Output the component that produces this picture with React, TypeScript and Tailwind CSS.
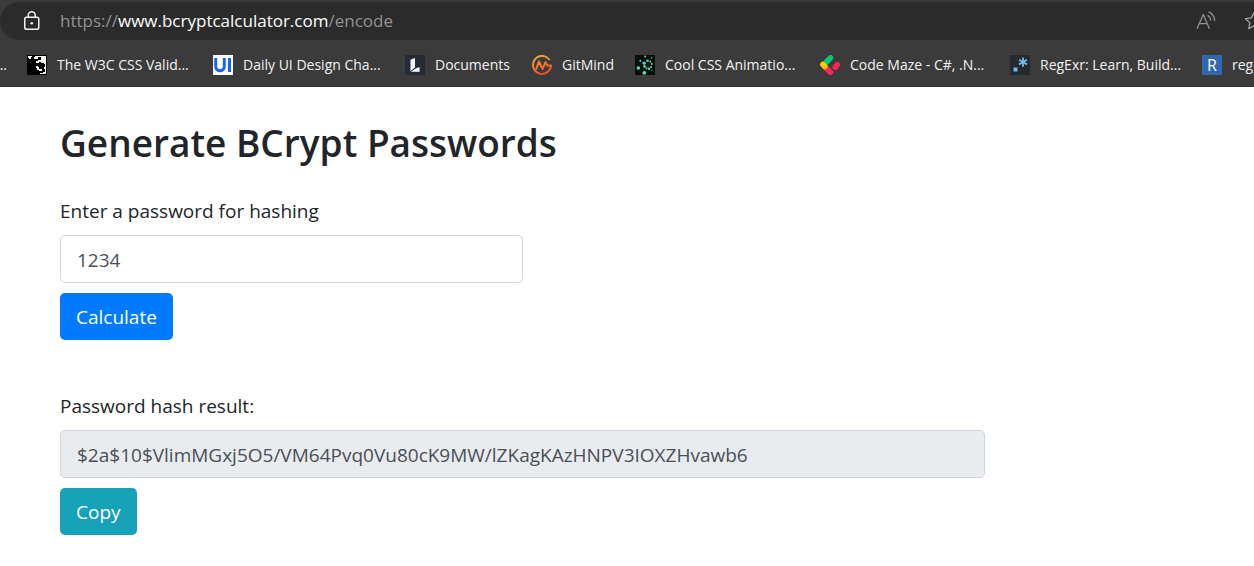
import { useState, type ReactNode } from "react";

function LockIcon() {
  return (
    <svg className="size-5 shrink-0" viewBox="0 0 20 20" fill="none" stroke="#f2f2f2" strokeWidth="1.5">
      <rect x="2.75" y="6.25" width="14" height="12" rx="1.8" />
      <path d="M6.25 6V4.300a3.500 3.500 0 0 1 7 0V6" />
      <circle cx="9.8" cy="12.300" r="1.3" fill="#f2f2f2" stroke="none" />
    </svg>
  );
}

function ReadAloudIcon() {
  return (
    <svg className="size-5" viewBox="0 0 20 20" fill="none" stroke="#929292" strokeWidth="1.3" strokeLinecap="round">
      <path d="M1.2 17.3 7.3 3.600l5.900 13.700M3.300 12.700h7.900" strokeLinejoin="round" />
      <path d="M12 4.600c1.700 1 2.600 2.600 2.700 4.600M13.200 1.200c3.200 1.600 5.300 4.600 5.400 8.400" />
    </svg>
  );
}

function StarIcon() {
  return (
    <svg className="size-5" viewBox="0 0 20 20" fill="none" stroke="#a2a2a2" strokeWidth="1.3" strokeLinejoin="round">
      <path d="m10 1.500 2.600 5.400 5.900.800-4.300 4.100 1 5.800-5.200-2.800-5.200 2.800 1-5.800L1.500 7.700l5.900-.8Z" />
    </svg>
  );
}

const icon = "size-5 shrink-0";

const bookmarks: { label: string; icon: ReactNode }[] = [
  {
    label: "The W3C CSS Valid...",
    icon: (
      <svg className={icon} viewBox="0 0 20 20">
        <path fill="#000" d="M0 0h20v20H0z" />
        <path fill="#f5f5ef" d="M1 1h4v1H4v2H2V3H1zM8 1h11v18h-6v-1h3v-1h2v-3h-1v-2h1V9h-1V8h-3V7h-2v1H9V6h2V4H7V2h1z" />
        <path fill="#000" d="M11 2h3v3h-3zM10 8h4v3h-4z" />
        <path fill="#f5f5ef" d="M9 11h2v1h1v2h3v2h-3v-1h-2v-2H9z" />
      </svg>
    ),
  },
  {
    label: "Daily UI Design Cha...",
    icon: (
      <svg className={icon} viewBox="0 0 20 20">
        <path fill="#fff" d="M0 0h20v20H0z" />
        <path d="M2.700 3v8.200c0 6 8.600 6 8.600 0V3M16.500 3v14" fill="none" stroke="#1763ff" strokeWidth="3" />
      </svg>
    ),
  },
  {
    label: "Documents",
    icon: (
      <svg className={icon} viewBox="0 0 20 20">
        <path fill="#252b35" d="M0 0h20v20H0z" />
        <path fill="#fff" d="M5.500 4.800 10 3v9.200l-4.500 4zM6 16.700l4.600-3.200 4-1.600v4.800z" />
      </svg>
    ),
  },
  {
    label: "GitMind",
    icon: (
      <svg className={icon} viewBox="0 0 20 20" fill="none">
        <defs>
          <linearGradient id="gitmind" x1="4" y1="1" x2="13" y2="19" gradientUnits="userSpaceOnUse">
            <stop stopColor="#f7a531" />
            <stop offset="1" stopColor="#ee4b2d" />
          </linearGradient>
        </defs>
        <g stroke="url(#gitmind)" strokeWidth="2" strokeLinecap="round" strokeLinejoin="round">
          <path d="M17.200 4.500A9 9 0 1 0 19 10.500h-3.500" />
          <path d="M4.200 14.200 7 6.500l3.500 7.700 3-7 2 3.300" />
        </g>
      </svg>
    ),
  },
  {
    label: "Cool CSS Animatio...",
    icon: (
      <svg className={icon} viewBox="0 0 20 20">
        <path fill="#050f0c" d="M0 0h20v20H0z" />
        <g fill="#55dfb5">
          <circle cx="9.300" cy="17.800" r="1.900" />
          <circle cx="3.300" cy="13" r="1.800" />
          <circle cx="5.300" cy="5.800" r="1" />
          <circle cx="10.200" cy="1.600" r="1" />
          <circle cx="16.500" cy="3" r=".7" />
          <circle cx="9.200" cy="8.200" r="1.600" fill="#4fd6d2" />
          <circle cx="9.500" cy="11.400" r="1.300" />
          <circle cx="11.500" cy="13.300" r="1" />
          <circle cx="14" cy="13.800" r="1.200" />
          <circle cx="16" cy="12" r="1" />
          <circle cx="16.700" cy="9" r="1.100" />
          <circle cx="15.400" cy="6.500" r="1" />
          <circle cx="12.500" cy="5.700" r="1.300" fill="#55e184" />
          <circle cx="17" cy="15.500" r=".6" />
        </g>
      </svg>
    ),
  },
  {
    label: "Code Maze - C#, .N...",
    icon: (
      <svg className={icon} viewBox="0 0 20 20" fill="none" strokeWidth="5.500" strokeLinecap="round">
        <path d="m5.500 8 5-5.200" stroke="#08c875" />
        <path d="m5 12 5.500 5.200M15.200 12.200l2-2.500" stroke="#ff2459" />
        <path d="m2.900 9.500 2 2" stroke="#ffc800" />
      </svg>
    ),
  },
  {
    label: "RegExr: Learn, Build...",
    icon: (
      <svg className={icon} viewBox="0 0 20 20">
        <path fill="#252a2e" d="M0 0h20v20H0z" />
        <path fill="#70b8ec" d="M3.500 12.500h4v4h-4z" />
        <path d="M13 2.500v9.200M9 4.800l8 4.600M9 9.400l8-4.600" stroke="#70b8ec" strokeWidth="1.800" />
      </svg>
    ),
  },
  {
    label: "regex101",
    icon: (
      <span className="flex size-5 shrink-0 items-center justify-center rounded-[1px] bg-[#3067ae] text-base leading-5 text-white" aria-hidden="true">
        R
      </span>
    ),
  },
];

function BrowserBar() {
  return (
    <header className="overflow-hidden border-b border-[#303030] bg-[#3b3b3b] pt-[2px]">
      <div className="flex h-[38px] items-center rounded-l-full bg-[#2b2b2b] pl-[22px]">
        <LockIcon />
        <div className="min-w-0 flex-1 truncate pl-[18px] text-[17px] leading-6 text-[#929292]">
          https://<span className="text-white">www.bcryptcalculator.com</span>/encode
        </div>
        <div className="-mr-[10px] flex shrink-0 gap-7">
          <button type="button" aria-label="Read aloud"><ReadAloudIcon /></button>
          <button type="button" aria-label="Add to favorites"><StarIcon /></button>
        </div>
      </div>
      <nav className="flex h-[46px] items-center pt-1 text-[14px] leading-5 text-[#f2f2f2]">
        <a href="#" className="w-[27px] shrink-0 -indent-1">...</a>
        <div className="grid grid-cols-[186px_192px_127px_103px_185px_190px_192px_100px]">
          {bookmarks.map((b) => (
            <a key={b.label} href="#" className="flex items-center gap-[10px] whitespace-nowrap">
              {b.icon}
              {b.label}
            </a>
          ))}
        </div>
      </nav>
    </header>
  );
}

const label = "block pb-2 text-[19px] leading-8";
const field = "block h-12 rounded-[5px] border border-[#ced4da] px-4 pt-[2px] text-[19px] leading-7 text-[#495057]";
const action = "mt-[10px] h-[47px] rounded-[5px] px-4 text-[19px] leading-7 text-white";

export default function App() {
  const [password, setPassword] = useState("1234");
  const hash = "$2a$10$VlimMGxj5O5/VM64Pvq0Vu80cK9MW/lZKagKAzHNPV3IOXZHvawb6";

  return (
    <div className="overflow-x-hidden bg-white font-['Segoe_UI','Open_Sans',sans-serif] text-[#212529]">
      <BrowserBar />
      <main className="px-[60px] pt-8 pb-8">
        <div className="max-w-[925px]">
          <h1 className="text-[37px] leading-[48px] font-semibold">Generate BCrypt Passwords</h1>
          <form className="pt-7" onSubmit={(e) => e.preventDefault()}>
            <label htmlFor="password" className={label}>
              Enter a password for hashing
            </label>
            <input
              id="password"
              type="text"
              value={password}
              onChange={(e) => setPassword(e.target.value)}
              className={`${field} w-1/2 bg-white`}
            />
            <button type="submit" className={`${action} bg-[#007bff]`}>Calculate</button>
          </form>
          <div className="pt-[50px]">
            <label htmlFor="hash" className={label}>
              Password hash result:
            </label>
            <input id="hash" type="text" readOnly value={hash} className={`${field} w-full bg-[#e9ecef]`} />
            <button type="button" className={`${action} bg-[#17a2b8]`} onClick={() => navigator.clipboard?.writeText(hash)}>
              Copy
            </button>
          </div>
        </div>
      </main>
    </div>
  );
}
